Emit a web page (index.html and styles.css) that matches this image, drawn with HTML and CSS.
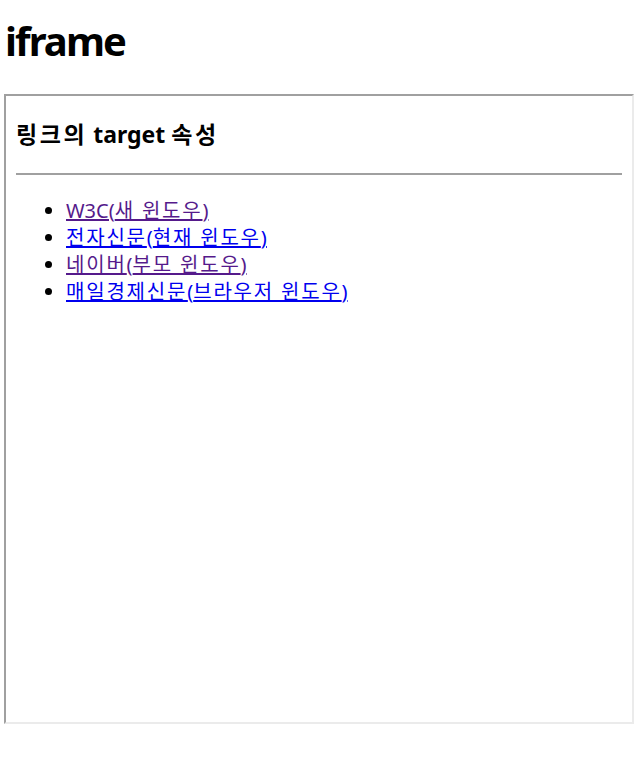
FILE: index.html
```html
<!DOCTYPE html>
<html lang="ko">
<head>
<meta charset="utf-8">
<title>iframe</title>
<link rel="stylesheet" href="styles.css">
</head>
<body>
<div class="page">
  <h1 class="title">iframe</h1>
  <div class="frame">
    <h3 class="frame-heading"><span class="ko">링크의</span> target <span class="ko">속성</span></h3>
    <hr class="rule">
    <ul class="links">
      <li><a class="visited" href="#">W3C(<span class="ko">새 윈도우</span>)</a></li>
      <li><a class="fresh" href="#"><span class="ko">전자신문</span>(<span class="ko">현재 윈도우</span>)</a></li>
      <li><a class="visited" href="#"><span class="ko">네이버</span>(<span class="ko">부모 윈도우</span>)</a></li>
      <li><a class="fresh" href="#"><span class="ko">매일경제신문</span>(<span class="ko">브라우저 윈도우</span>)</a></li>
    </ul>
  </div>
</div>
</body>
</html>
```
FILE: styles.css
```css
html, body {
  margin: 0;
  padding: 0;
  background: #fff;
}
body {
  font-family: "Noto Sans", "Noto Sans CJK KR", sans-serif;
  color: #000;
}
.page {
  padding: 14px 0 0 4px;
}
.title {
  margin: 0 0 0 1px;
  font-size: 40px;
  line-height: 53px;
  font-weight: 700;
  letter-spacing: -1.9px;
}
.frame {
  box-sizing: border-box;
  width: 630px;
  height: 630px;
  margin-top: 27px;
  border-style: solid;
  border-width: 2px;
  border-color: #a0a0a0 #ebebeb #ebebeb #a0a0a0;
  padding: 0 10px;
  overflow: hidden;
}
.frame-heading {
  margin: 23px 0 0;
  font-size: 23px;
  line-height: 31px;
  font-weight: 700;
}
.frame-heading .ko {
  letter-spacing: 2.6px;
}
.rule {
  margin: 23px 0 0;
  height: 0;
  border: 0;
  border-top: 2px solid #a0a0a0;
}
.links {
  margin: 22px 0 0;
  padding-left: 50px;
  font-size: 20px;
  line-height: 27px;
}
.links a {
  text-decoration: underline;
}
.links .ko {
  letter-spacing: 1.8px;
}
.visited { color: #551a8b; }
.fresh { color: #0000ee; }
```
